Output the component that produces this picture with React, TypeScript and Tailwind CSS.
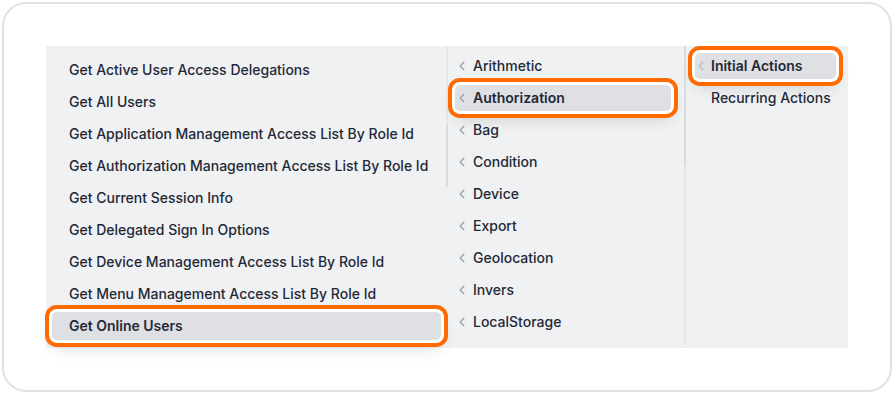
import React from "react";

const font = { fontFamily: "Inter, 'Noto Sans', sans-serif" };

const Chevron = ({ light }: { light?: boolean }) => (
  <svg width="6" height="10" viewBox="0 0 6 10" className="shrink-0 mt-[1px]">
    <path
      d="M4.8 1.2 L1.2 5 L4.8 8.8"
      fill="none"
      stroke={light ? "#b9bdc6" : "#9ca3af"}
      strokeWidth="1.4"
      strokeLinecap="round"
      strokeLinejoin="round"
    />
  </svg>
);

const leftItems = [
  "Get Active User Access Delegations",
  "Get All Users",
  "Get Application Management Access List By Role Id",
  "Get Authorization Management Access List By Role Id",
  "Get Current Session Info",
  "Get Delegated Sign In Options",
  "Get Device Management Access List By Role Id",
  "Get Menu Management Access List By Role Id",
  "Get Online Users",
];

const midItems = [
  "Arithmetic",
  "Authorization",
  "Bag",
  "Condition",
  "Device",
  "Export",
  "Geolocation",
  "Invers",
  "LocalStorage",
];

const hl =
  "bg-[#dfe0e4] font-semibold shadow-[0_0_0_3px_#ffffff,0_0_0_7px_#ff6b00,0_8px_16px_rgba(0,0,0,0.14)]";

export default function App() {
  return (
    <div className="w-[894px] h-[395px] bg-white p-[2px]" style={font}>
      <div className="w-[890px] h-[390px] border-2 border-[#e0e2e6] rounded-[24px] p-[42px]">
        <div className="flex h-[302px] bg-[#f0f1f3] text-[14px] text-[#1f2937] font-medium">
          {/* left column */}
          <div className="relative w-[402px] pt-[8px]">
            <div className="absolute right-0 top-0 w-[2px] h-[79px] bg-[#e6e7ea]" />
            <div className="absolute right-0 top-[79px] w-[2px] h-[62px] bg-[#d9dbdf]" />
            {leftItems.map((t, i) => (
              <div key={t} className="h-[32px] flex items-center">
                <div
                  className={`ml-[6px] mr-[7px] flex-1 h-[28px] rounded-[5px] pl-[17px] pb-[2px] flex items-center ${
                    i === leftItems.length - 1 ? hl : ""
                  }`}
                >
                  {t}
                </div>
              </div>
            ))}
          </div>
          {/* middle column */}
          <div className="relative w-[238px] pt-[4px]">
            <div className="absolute right-0 top-0 w-[2px] h-[119px] bg-[#d9dbdf]" />
            <div className="absolute right-0 top-[119px] w-[2px] h-[180px] bg-[#e4e5e8]" />
            {midItems.map((t, i) => (
              <div key={t} className="h-[32px] flex items-center">
                <div
                  className={`ml-[7px] mr-[15px] flex-1 h-[26px] rounded-[5px] pl-[4px] pb-[2px] flex items-center ${
                    i === 1 ? hl : ""
                  }`}
                >
                  <Chevron />
                  <span className="ml-[8px]">{t}</span>
                </div>
              </div>
            ))}
          </div>
          {/* right column */}
          <div className="w-[162px] pt-[4px]">
            <div className="h-[32px] flex items-center">
              <div
                className={`ml-[9px] mr-[12px] flex-1 h-[26px] rounded-[5px] pl-[3px] pb-[2px] flex items-center ${hl}`}
              >
                <Chevron light />
                <span className="ml-[7px]">Initial Actions</span>
              </div>
            </div>
            <div className="h-[32px] flex items-center">
              <div className="ml-[9px] mr-[12px] flex-1 h-[26px] pl-[16px] pb-[2px] flex items-center">
                Recurring Actions
              </div>
            </div>
          </div>
        </div>
      </div>
    </div>
  );
}
